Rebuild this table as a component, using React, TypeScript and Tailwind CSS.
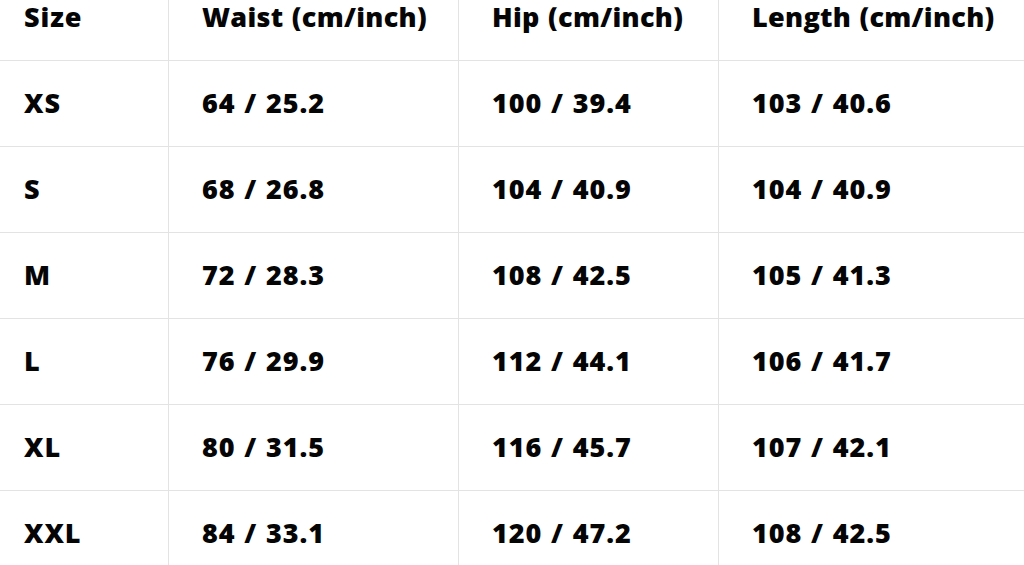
import React from "react";

const header = ["Size", "Waist (cm/inch)", "Hip (cm/inch)", "Length (cm/inch)"];
const rows = [
  ["XS", "64 / 25.2", "100 / 39.4", "103 / 40.6"],
  ["S", "68 / 26.8", "104 / 40.9", "104 / 40.9"],
  ["M", "72 / 28.3", "108 / 42.5", "105 / 41.3"],
  ["L", "76 / 29.9", "112 / 44.1", "106 / 41.7"],
  ["XL", "80 / 31.5", "116 / 45.7", "107 / 42.1"],
  ["XXL", "84 / 33.1", "120 / 47.2", "108 / 42.5"],
];

const widths = ["w-[176px]", "w-[290px]", "w-[260px]", "w-[320px]"];

export default function App() {
  return (
    <div className="w-[1024px] h-[565px] overflow-hidden bg-white">
      <table
        className="-mt-[26px] -ml-[8px] border-collapse table-fixed w-[1046px] text-[#050505] font-extrabold text-[27px] tracking-[0.9px] [word-spacing:1px]"
        style={{ fontFamily: '"Open Sans", "Noto Sans", sans-serif' }}
      >
        <thead>
          <tr className="h-[86px]">
            {header.map((h, i) => (
              <th
                key={i}
                className={`${widths[i]} text-left align-middle ${i === 0 ? "pl-[31px] tracking-[0.9px]" : "pl-[33px] tracking-[0.3px]"} border border-[#e3e3e3] border-t-0 font-extrabold`}
              >
                {h}
              </th>
            ))}
          </tr>
        </thead>
        <tbody>
          {rows.map((r, ri) => (
            <tr key={ri} className="h-[86px]">
              {r.map((c, ci) => (
                <td
                  key={ci}
                  className={`text-left align-middle ${ci === 0 ? "pl-[31px]" : "pl-[33px]"} border border-[#e3e3e3]`}
                >
                  {c}
                </td>
              ))}
            </tr>
          ))}
        </tbody>
      </table>
    </div>
  );
}
